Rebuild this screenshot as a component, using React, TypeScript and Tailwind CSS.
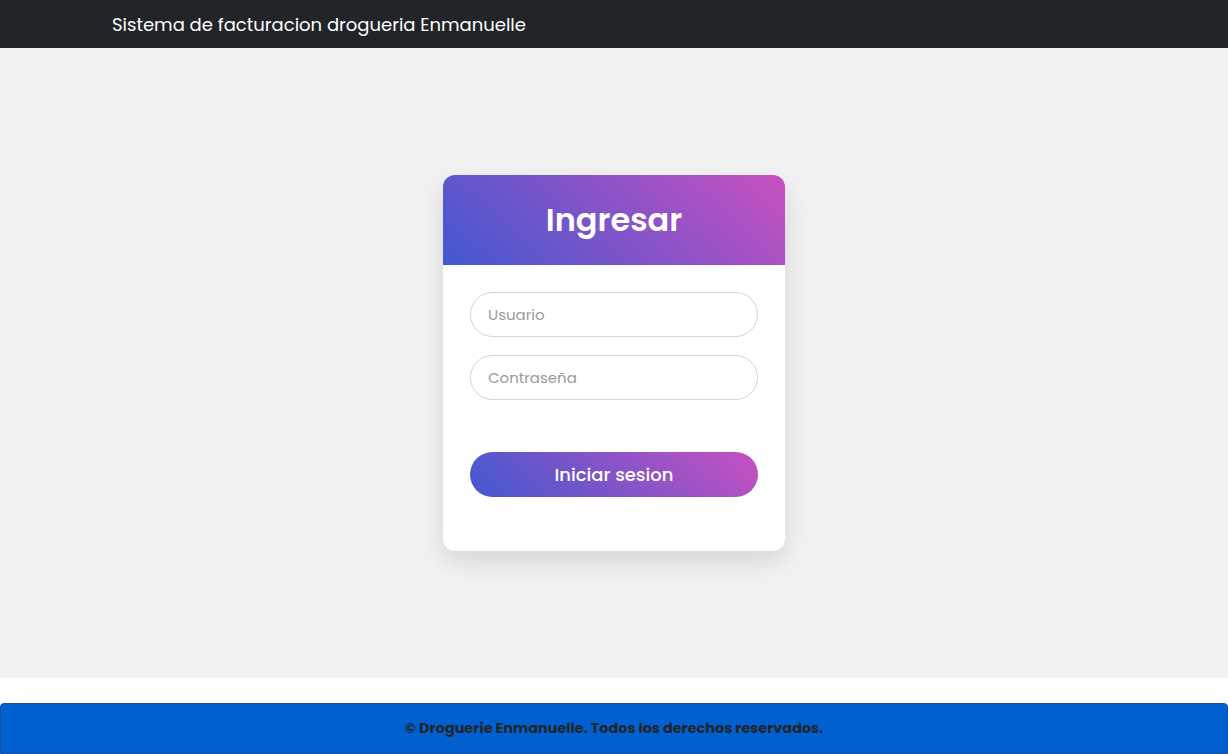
export default function App() {
  const font = { fontFamily: 'Poppins, "Open Sans", "Noto Sans", sans-serif' }
  return (
    <div className="min-h-screen bg-white flex flex-col" style={font}>
      {/* Navbar */}
      <nav className="h-12 bg-[#212529] flex items-center px-[112px]">
        <span className="text-white text-[18px]">Sistema de facturacion drogueria Enmanuelle</span>
      </nav>

      {/* Login */}
      <main className="h-[630px] bg-[#f2f2f2] flex items-center justify-center">
        <div className="w-[342px] bg-white rounded-xl shadow-[0_10px_25px_rgba(0,0,0,0.12)] overflow-hidden">
          <div className="h-[90px] bg-[linear-gradient(43deg,#4158d0,#c850c0)] flex items-center justify-center">
            <h1 className="text-white text-[32px] font-semibold">Ingresar</h1>
          </div>
          <div className="px-[27px] pt-[27px] pb-[54px]">
            <input
              placeholder="Usuario"
              className="w-full h-[45px] rounded-full border border-[#d4d4d4] px-[17px] text-[15px] placeholder:text-[#9a9a9a] outline-none"
            />
            <input
              type="password"
              placeholder="Contraseña"
              className="w-full h-[45px] mt-[18px] rounded-full border border-[#d4d4d4] px-[17px] text-[15px] placeholder:text-[#9a9a9a] outline-none"
            />
            <button className="w-full h-[45px] mt-[52px] rounded-full bg-[linear-gradient(43deg,#4158d0,#c850c0)] text-white text-[18px] font-medium">
              Iniciar sesion
            </button>
          </div>
        </div>
      </main>

      <div className="h-[25px]" />

      {/* Footer */}
      <footer className="h-[51px] bg-[#0060cf] border border-[#1d4f9a] rounded-t flex items-center justify-center">
        <p className="text-[#212529] text-[14.4px] font-bold">© Droguerie Enmanuelle. Todos los derechos reservados.</p>
      </footer>
    </div>
  )
}
